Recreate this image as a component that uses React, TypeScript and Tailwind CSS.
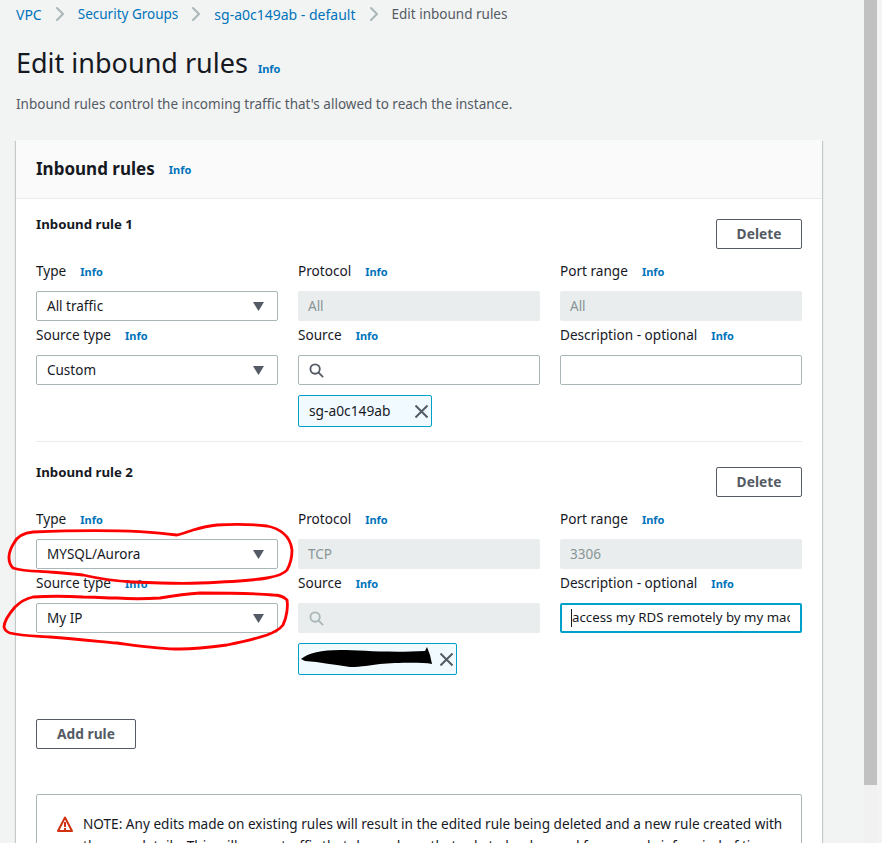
import { ChevronRight } from "lucide-react";

const Info = ({ className = "" }: { className?: string }) => (
  <span className={`text-[11px] font-bold text-[#0073bb] ${className}`}>Info</span>
);

const Caret = () => (
  <svg width="11" height="9" viewBox="0 0 11 9" className="absolute right-[13px] top-[10px]">
    <path d="M0 0h11L5.5 9z" fill="#545b64" />
  </svg>
);

const SearchIcon = ({ color }: { color: string }) => (
  <svg width="15" height="15" viewBox="0 0 16 16" fill="none" stroke={color} strokeWidth="2" className="shrink-0">
    <circle cx="6.5" cy="6.5" r="5" />
    <path d="M10 10l5 5" />
  </svg>
);

const Label = ({ text }: { text: string }) => (
  <div className="flex h-5 items-center text-[13.6px] text-[#16191f]">
    <span>{text}</span>
    <Info className="ml-[14px] mt-[2px]" />
  </div>
);

const Select = ({ value }: { value: string }) => (
  <div className="relative flex h-[30px] items-center rounded-[2px] border border-[#aab7b8] bg-white pl-[10px] text-[13.5px] text-[#16191f]">
    {value}
    <Caret />
  </div>
);

const Disabled = ({ value }: { value: string }) => (
  <div className="flex h-[30px] items-center rounded-[2px] bg-[#eaeded] pl-[10px] text-[13.5px] text-[#879596]">{value}</div>
);

const Tag = ({ width, children }: { width: string; children?: React.ReactNode }) => (
  <div className={`flex h-8 items-center justify-between rounded-[2px] border border-[#00a1c9] bg-[#f1faff] pl-[10px] pr-[3px] text-[13.75px] text-[#16191f] ${width}`}>
    <span>{children}</span>
    <svg width="13" height="13" viewBox="0 0 13 13" fill="none" stroke="#545b64" strokeWidth="2">
      <path d="M0.5 0.5l12 12M12.5 0.5l-12 12" />
    </svg>
  </div>
);

const Field = ({ label, children }: { label: string; children: React.ReactNode }) => (
  <div className="flex flex-col gap-[10px]">
    <Label text={label} />
    {children}
  </div>
);

const RuleHeader = ({ title }: { title: string }) => (
  <div className="mb-3 flex h-[35px] items-start justify-between">
    <div className="text-[13.25px] font-bold leading-5 text-[#16191f]">{title}</div>
    <button className="mt-[5px] h-[30px] w-[86px] rounded-[2px] border border-[#545b64] bg-white text-[13.75px] font-bold text-[#545b64]">
      Delete
    </button>
  </div>
);

const Crumb = () => <ChevronRight size={24} strokeWidth={2} className="mx-[6px] text-[#aab7b8]" />;

const App = () => {
  return (
    <div className="relative flex h-[843px] w-full overflow-hidden bg-[#f2f3f3] font-['Noto_Sans',sans-serif]">
      <main className="w-[864px] shrink-0 pl-4 pr-[42px]">
        {/* Breadcrumbs */}
        <nav className="flex h-7 items-center text-[13.5px]">
          <span className="text-[14px] text-[#0073bb]">VPC</span>
          <Crumb />
          <span className="text-[#0073bb]">Security Groups</span>
          <Crumb />
          <span className="text-[14px] text-[#0073bb]">sg-a0c149ab - default</span>
          <Crumb />
          <span className="text-[#545b64]">Edit inbound rules</span>
        </nav>

        <div className="mt-[17px] flex h-9 items-center">
          <h1 className="text-[27px] font-normal leading-9 text-[#16191f]">Edit inbound rules</h1>
          <Info className="ml-[10px] mt-[12px]" />
        </div>
        <p className="mt-[13px] text-[13.5px] leading-5 text-[#545b64]">
          Inbound rules control the incoming traffic that's allowed to reach the instance.
        </p>

        {/* Card */}
        <section className="mt-[26px] w-[806px] bg-white shadow-[0_1px_1px_0_rgba(0,28,36,0.3),1px_1px_1px_0_rgba(0,28,36,0.15),-1px_1px_1px_0_rgba(0,28,36,0.15)]">
          <header className="flex h-[59px] items-center border-b border-[#eaeded] bg-[#fafafa] px-5">
            <h2 className="text-[17px] font-bold text-[#16191f]">Inbound rules</h2>
            <Info className="ml-[14px] mt-[3px]" />
          </header>

          <div className="px-5 pt-[15px]">
            <RuleHeader title="Inbound rule 1" />
            <div className="grid grid-cols-3 gap-x-5 gap-y-1">
              <Field label="Type"><Select value="All traffic" /></Field>
              <Field label="Protocol"><Disabled value="All" /></Field>
              <Field label="Port range"><Disabled value="All" /></Field>
              <Field label="Source type"><Select value="Custom" /></Field>
              <Field label="Source">
                <div className="flex h-[30px] items-center rounded-[2px] border border-[#aab7b8] bg-white pl-[10px]">
                  <SearchIcon color="#545b64" />
                </div>
                <Tag width="w-[134px]">sg-a0c149ab</Tag>
              </Field>
              <Field label="Description - optional">
                <div className="h-[30px] rounded-[2px] border border-[#aab7b8] bg-white" />
              </Field>
            </div>

            <div className="mb-5 mt-[14px] border-t border-[#eaeded]" />

            <RuleHeader title="Inbound rule 2" />
            <div className="grid grid-cols-3 gap-x-5 gap-y-1">
              <Field label="Type"><Select value="MYSQL/Aurora" /></Field>
              <Field label="Protocol"><Disabled value="TCP" /></Field>
              <Field label="Port range"><Disabled value="3306" /></Field>
              <Field label="Source type"><Select value="My IP" /></Field>
              <Field label="Source">
                <div className="flex h-[30px] items-center rounded-[2px] bg-[#eaeded] pl-[11px]">
                  <SearchIcon color="#aab7b8" />
                </div>
                <Tag width="w-[159px]" />
              </Field>
              <Field label="Description - optional">
                <div className="flex h-[30px] items-center overflow-hidden rounded-[2px] border-2 border-[#00a1c9] bg-white pl-[9px] pr-[10px]">
                  <span className="h-[18px] w-px shrink-0 bg-[#16191f]" />
                  <span className="overflow-hidden whitespace-nowrap text-[13.25px] text-[#16191f]">
                    access my RDS remotely by my machine
                  </span>
                </div>
              </Field>
            </div>

            <button className="mt-11 h-[30px] w-[100px] rounded-[2px] border border-[#545b64] bg-white text-[13.75px] font-bold text-[#545b64]">
              Add rule
            </button>

            {/* Warning note */}
            <div className="mt-[45px] flex gap-[10px] rounded-[2px] border border-[#aab7b8] bg-white pl-5 pr-3 pt-[18px] text-[13.6px] leading-[22px] text-[#16191f]">
              <svg width="16" height="16" viewBox="0 0 16 16" className="mt-[3px] shrink-0">
                <path d="M8 1.5L15 15H1z" fill="none" stroke="#d13212" strokeWidth="2" strokeLinejoin="round" />
                <path d="M8 6v5M8 12v2" stroke="#d13212" strokeWidth="2" />
              </svg>
              <p>
                NOTE: Any edits made on existing rules will result in the edited rule being deleted and a new rule created with
                the new details. This will cause traffic that depends on that rule to be dropped for a very brief period of time
                until the new rule can be created.
              </p>
            </div>
          </div>
        </section>
      </main>

      {/* Scrollbar */}
      <div className="h-full w-[13px] shrink-0 bg-[#f1f1f1]">
        <div className="h-[785px] bg-[#c1c1c1]" />
      </div>

      {/* Red annotation and redaction marks drawn over the screenshot */}
      <svg className="pointer-events-none absolute left-0 top-0" width="882" height="843" fill="none">
        <path
          d="M177 535C140 530 80 530 33 532C22 533 17 537 14 543C8 552 7 562 13 568C25 572 40 571 50 572C65 573 75 574 83 575C100 579 115 581 133 582C155 583 180 584 200 583C225 582 250 581 267 578C278 576 284 574 287 570C291 563 292 556 292 550C291 542 288 537 283 533C278 529 272 527 267 526C250 524 232 524 217 525C208 526 200 528 193 530C187 532 182 534 177 535Z"
          stroke="#ff0000"
          strokeWidth="2.8"
        />
        <path
          d="M83 597C65 596 48 596 33 597C24 599 19 603 15 607C9 614 4 621 4 627C5 631 7 632 10 633C22 636 37 636 50 637C75 639 95 641 117 643C140 646 160 649 180 649C197 649 212 647 227 645C242 642 255 639 267 635C275 632 280 629 283 625C287 617 288 606 287 600C284 597 279 595 273 595C250 593 225 593 200 593C185 594 172 596 160 598C145 599 130 599 117 598C105 598 94 597 83 597Z"
          stroke="#ff0000"
          strokeWidth="2.8"
        />
        <path
          d="M301 659C308 653 322 650 340 650C360 650 385 653 425 651L427 647L430 655L432 664C420 662 395 663 380 664C370 665 362 667 350 667C335 665 320 662 305 661Z"
          fill="#000000"
        />
      </svg>
    </div>
  );
};

export default App;
